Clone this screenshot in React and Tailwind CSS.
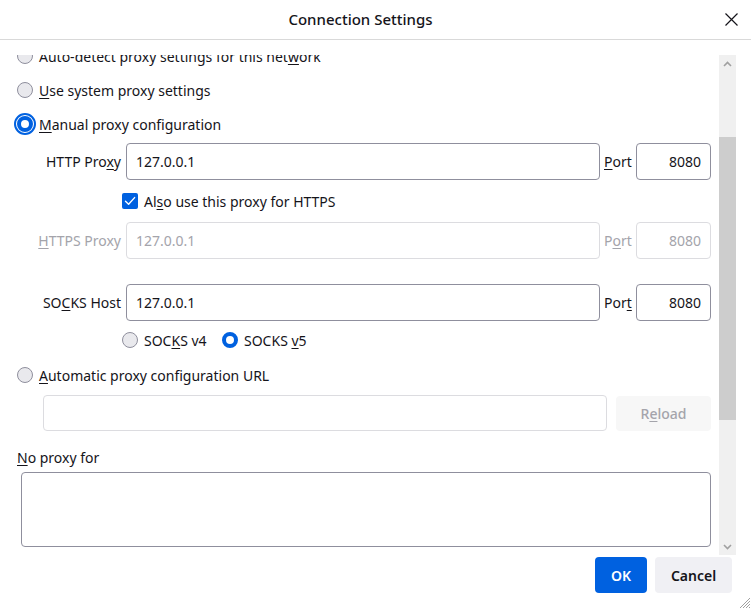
import React from "react";

const FONT = { fontFamily: '"Noto Sans", "Liberation Sans", sans-serif' };

function Radio({ checked, focus }) {
  if (checked) {
    return (
      <span
        className={
          "box-border inline-block w-[16px] h-[16px] rounded-full border-[4px] border-[#0061e0] bg-white shrink-0 " +
          (focus ? "outline-2 outline-[#0061e0] outline-offset-[1px]" : "")
        }
      />
    );
  }
  return (
    <span className="box-border inline-block w-[16px] h-[16px] rounded-full border border-[#8f8f9d] bg-[#e9e9ed] shrink-0" />
  );
}

function Checkbox() {
  return (
    <span className="w-[16px] h-[16px] rounded-[2px] bg-[#0061e0] flex items-center justify-center shrink-0">
      <svg width="12" height="12" viewBox="0 0 12 12" fill="none">
        <path d="M1.5 6.2 L4.6 9.2 L10.6 2.6" stroke="white" strokeWidth="1.4" strokeLinecap="round" strokeLinejoin="round" />
      </svg>
    </span>
  );
}

function U({ children }) {
  return <span className="underline underline-offset-[2px] decoration-1">{children}</span>;
}

function ProxyRow({ label, value, port, disabled, portLabel }) {
  const txt = disabled ? "text-[#a4a4ab]" : "text-[#15141a]";
  const border = disabled ? "border-[#dcdce0]" : "border-[#8f8f9d]";
  return (
    <div className="flex items-center h-[37px]">
      <div className={"w-[105px] text-right pr-[1px] " + txt}>{label}</div>
      <div className={"ml-[4px] flex-1 h-full rounded-[4px] border flex items-center pl-[9px] " + border + " " + (disabled ? "text-[#a4a4ab]" : "text-[#15141a]")}>
        {value}
      </div>
      <div className={"w-[36px] pl-[4px] " + txt}>{portLabel}</div>
      <div className={"w-[75px] h-full rounded-[4px] border flex items-center justify-end pr-[9px] " + border + " " + (disabled ? "text-[#a4a4ab]" : "text-[#15141a]")}>
        {port}
      </div>
    </div>
  );
}

function Chevron({ up }) {
  return (
    <svg width="9" height="6" viewBox="0 0 9 6" fill="none">
      <path
        d={up ? "M1 5 L4.5 1.5 L8 5" : "M1 1 L4.5 4.5 L8 1"}
        stroke="#a0a0a0"
        strokeWidth="1.6"
      />
    </svg>
  );
}

export default function App() {
  return (
    <div className="w-[751px] h-[609px] bg-white flex flex-col text-[14px] text-[#15141a] overflow-hidden relative" style={FONT}>
      {/* Header */}
      <div className="h-[40px] shrink-0 border-b border-[#d9d9d9] flex items-center relative">
        <div className="flex-1 text-center text-[15px] font-medium pl-[-10px] mr-[30px]">Connection Settings</div>
        <div className="absolute right-[13px] top-[13px]">
          <svg width="13" height="13" viewBox="0 0 13 13" fill="none">
            <path d="M0.5 0.5 L12.5 12.5 M12.5 0.5 L0.5 12.5" stroke="#15141a" strokeWidth="1.2" />
          </svg>
        </div>
      </div>

      {/* Body */}
      <div className="flex h-[500px] mt-[15px] shrink-0">
        <div className="flex-1 overflow-hidden">
          <div className="pl-[17px] pr-[8px] mt-[-11px] flex flex-col">
            <div className="h-[24px] flex items-center gap-[6px]">
              <Radio />
              <span>Auto-detect proxy settings for this net<U>w</U>ork</span>
            </div>
            <div className="h-[24px] mt-[10px] flex items-center gap-[6px]">
              <Radio />
              <span><U>U</U>se system proxy settings</span>
            </div>
            <div className="h-[24px] mt-[10px] flex items-center gap-[6px]">
              <Radio checked focus />
              <span><U>M</U>anual proxy configuration</span>
            </div>

            <div className="mt-[7px]">
              <ProxyRow label={<>HTTP Pro<U>x</U>y</>} value="127.0.0.1" port="8080" portLabel={<><U>P</U>ort</>} />
            </div>
            <div className="h-[24px] mt-[9px] flex items-center gap-[6px] pl-[105px]">
              <Checkbox />
              <span>Al<U>s</U>o use this proxy for HTTPS</span>
            </div>
            <div className="mt-[9px]">
              <ProxyRow disabled label={<><U>H</U>TTPS Proxy</>} value="127.0.0.1" port="8080" portLabel={<>P<U>o</U>rt</>} />
            </div>
            <div className="mt-[25px]">
              <ProxyRow label={<>SO<U>C</U>KS Host</>} value="127.0.0.1" port="8080" portLabel={<>Por<U>t</U></>} />
            </div>
            <div className="h-[24px] mt-[7px] flex items-center pl-[105px]">
              <div className="flex items-center gap-[6px] w-[100px]">
                <Radio />
                <span>SOC<U>K</U>S v4</span>
              </div>
              <div className="flex items-center gap-[6px]">
                <Radio checked />
                <span>SOCKS <U>v</U>5</span>
              </div>
            </div>

            <div className="h-[24px] mt-[11px] flex items-center gap-[6px]">
              <Radio />
              <span><U>A</U>utomatic proxy configuration URL</span>
            </div>
            <div className="mt-[8px] flex items-center pl-[26px] h-[36px]">
              <div className="flex-1 h-full rounded-[4px] border border-[#dcdce0]" />
              <div className="ml-[9px] w-[95px] h-[35px] rounded-[4px] bg-[#f7f7f7] text-[#a4a4ab] flex items-center justify-center font-medium">
                R<U>e</U>load
              </div>
            </div>

            <div className="h-[24px] mt-[14px] flex items-center">
              <span><U>N</U>o proxy for</span>
            </div>
            <div className="mt-[3px] ml-[4px] h-[75px] rounded-[4px] border border-[#8f8f9d]" />
          </div>
        </div>

        {/* Scrollbar */}
        <div className="w-[17px] bg-[#f0f0f0] flex flex-col shrink-0">
          <div className="h-[17px] flex items-center justify-center"><Chevron up /></div>
          <div className="h-[65px]" />
          <div className="h-[283px] bg-[#cdcdcd]" />
          <div className="flex-1" />
          <div className="h-[17px] flex items-center justify-center"><Chevron /></div>
        </div>
        <div className="w-[15px] shrink-0" />
      </div>

      {/* Footer */}
      <div className="flex justify-end gap-[8px] pr-[19px] pt-[2px]">
        <div className="w-[52px] h-[36px] rounded-[4px] bg-[#0061e0] text-white flex items-center justify-center font-semibold">OK</div>
        <div className="w-[77px] h-[36px] rounded-[4px] bg-[#f0f0f4] text-[#15141a] flex items-center justify-center font-semibold">Cancel</div>
      </div>

      {/* Resize grip */}
      <div className="absolute right-0 bottom-0">
        <svg width="14" height="14" viewBox="0 0 14 14" fill="none">
          <path d="M13 3 L3 13 M13 6 L6 13 M13 9 L9 13 M13 12 L12 13" stroke="#a0a0a0" strokeWidth="1" />
        </svg>
      </div>
    </div>
  );
}
